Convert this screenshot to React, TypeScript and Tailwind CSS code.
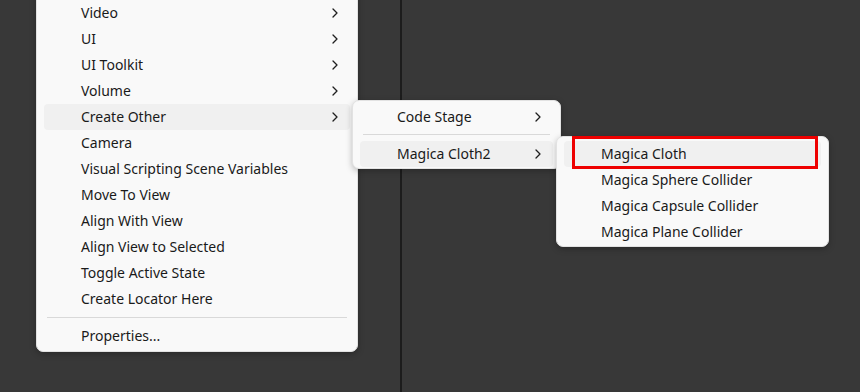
const font = { fontFamily: '"Noto Sans", "Open Sans", sans-serif' };

function Chevron() {
  return (
    <svg width="8" height="12" viewBox="0 0 8 12" fill="none" className="shrink-0">
      <path d="M2 2l4 4-4 4" stroke="#1f1f1f" strokeWidth="1.3" strokeLinecap="round" strokeLinejoin="round" />
    </svg>
  );
}

type Item = { label: string; sub?: boolean; active?: boolean };

function Row({ item }: { item: Item }) {
  return (
    <div
      className={`mx-[7px] h-[26px] rounded-[4px] flex items-center justify-between pl-[37px] pr-[11px] ${
        item.active ? 'bg-[#f0f0f0]' : ''
      }`}
    >
      <span className="text-[14px] text-[#1a1a1a] whitespace-nowrap leading-none">{item.label}</span>
      {item.sub && <Chevron />}
    </div>
  );
}

const mainItems: Item[] = [
  { label: 'Video', sub: true },
  { label: 'UI', sub: true },
  { label: 'UI Toolkit', sub: true },
  { label: 'Volume', sub: true },
  { label: 'Create Other', sub: true, active: true },
  { label: 'Camera' },
  { label: 'Visual Scripting Scene Variables' },
  { label: 'Move To View' },
  { label: 'Align With View' },
  { label: 'Align View to Selected' },
  { label: 'Toggle Active State' },
  { label: 'Create Locator Here' },
];

const magicaItems: Item[] = [
  { label: 'Magica Cloth', active: true },
  { label: 'Magica Sphere Collider' },
  { label: 'Magica Capsule Collider' },
  { label: 'Magica Plane Collider' },
];

const menu = 'absolute bg-[#f9f9f9] border border-[#e2e2e2] shadow-[0_2px_6px_rgba(0,0,0,0.25)]';

export default function App() {
  return (
    <div className="relative w-[860px] h-[392px] bg-[#383838] overflow-hidden" style={font}>
      {/* split line between panels */}
      <div className="absolute left-[400px] top-0 w-[2px] h-full bg-[#1c1c1c]" />

      {/* main context menu, top is cut off */}
      <div className={`${menu} left-[36px] top-[-8px] w-[322px] pt-[7px] pb-[2px] rounded-b-[7px]`}>
        {mainItems.map((it) => (
          <Row key={it.label} item={it} />
        ))}
        <div className="mx-[10px] my-[5px] h-px bg-[#d9d9d9]" />
        <Row item={{ label: 'Properties...' }} />
      </div>

      {/* Create Other submenu */}
      <div className={`${menu} left-[352px] top-[100px] w-[209px] pt-[3px] pb-[1px] rounded-[7px]`}>
        <Row item={{ label: 'Code Stage', sub: true }} />
        <div className="mx-[10px] mt-[4px] mb-[6px] h-px bg-[#d9d9d9]" />
        <Row item={{ label: 'Magica Cloth2', sub: true, active: true }} />
      </div>

      {/* Magica Cloth2 submenu */}
      <div className={`${menu} left-[556px] top-[136px] w-[273px] pt-[4px] pb-[1px] rounded-[7px]`}>
        {magicaItems.map((it) => (
          <Row key={it.label} item={it} />
        ))}
      </div>

      {/* red highlight annotation */}
      <div className="absolute left-[572px] top-[136px] w-[246px] h-[33px] border-[3px] border-[#ee0000]" />
    </div>
  );
}
